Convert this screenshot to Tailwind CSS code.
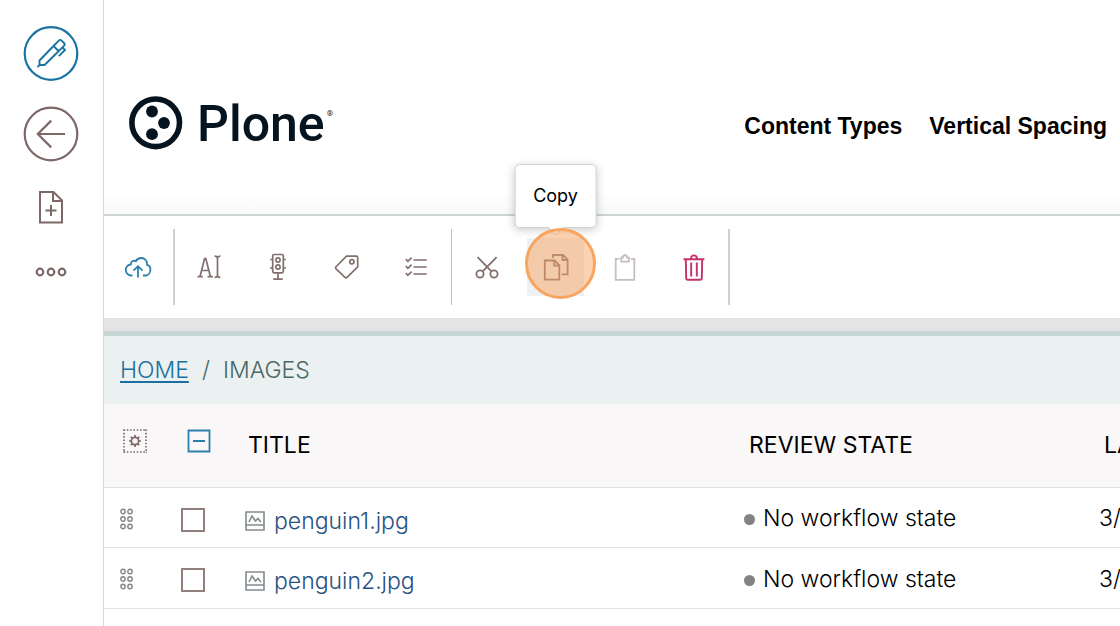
<!DOCTYPE html>
<html lang="en">
<head>
<meta charset="utf-8">
<meta name="viewport" content="width=device-width, initial-scale=1">
<title>Images – Plone</title>
<script src="https://cdn.jsdelivr.net/npm/@tailwindcss/browser@4"></script>
</head>
<body class="flex h-screen overflow-hidden bg-white font-[Inter,sans-serif] text-black">

<aside class="flex w-[104px] shrink-0 flex-col items-center border-r border-[#cfdcdf] pt-[25px] pr-[2px] text-[#7d6867]">
  <button type="button" aria-label="Edit" class="text-[#1a74a3]">
    <svg class="block" width="56" height="56" viewBox="0 0 56 56" fill="none" stroke="currentColor" stroke-width="2.2">
      <circle cx="28" cy="28.5" r="26.3"/>
      <path d="M16.5 40V35.5L30.5 21L35.8 15.6Q37.2 14.2 38.6 15.6L41 18Q42.4 19.4 41 20.8L36 25.7L21.6 40Z M30.5 21L35.6 26 M39.5 22.4L42 25L35.8 31.2 M16.5 40L14.5 42" stroke-width="1.9"/>
    </svg>
  </button>
  <button type="button" aria-label="Back" class="mt-[25px]">
    <svg class="block" width="56" height="56" viewBox="0 0 56 56" fill="none" stroke="currentColor" stroke-width="2.2">
      <circle cx="28" cy="28" r="26.3"/>
      <path d="M42 28H14.5M28.2 14.6L14.8 28L28.2 41.4"/>
    </svg>
  </button>
  <button type="button" aria-label="Add content" class="mt-7">
    <svg class="block" width="26" height="34" viewBox="0 0 26 34" fill="none" stroke="currentColor" stroke-width="2">
      <path d="M2 2H15.5L24 10.5V32.5H2ZM15 2V11H24M13 15V26M7.5 20.5H18.5"/>
    </svg>
  </button>
  <button type="button" aria-label="More" class="mt-[42px]">
    <svg class="block" width="32" height="12" viewBox="0 0 32 12" fill="none" stroke="currentColor" stroke-width="2.2">
      <circle cx="5" cy="6" r="3.3"/><circle cx="16" cy="6" r="3.3"/><circle cx="27" cy="6" r="3.3"/>
    </svg>
  </button>
</aside>

<div class="flex min-w-0 flex-1 flex-col overflow-hidden">
  <header class="flex h-[216px] shrink-0 items-center justify-between border-b-2 border-[#ccd4d5] bg-linear-to-b from-white from-90% to-[#f8f9f9] pr-[13px] pb-px pl-6 pt-[34px]">
    <a href="#" aria-label="Plone" class="flex items-center gap-[13px] text-[#06141f]">
      <svg class="block" width="56" height="56" viewBox="0 0 56 56" fill="currentColor">
        <circle cx="27.7" cy="26.8" r="23.8" fill="none" stroke="currentColor" stroke-width="5.6"/>
        <circle cx="24" cy="15.5" r="5.9"/><circle cx="36" cy="27" r="5.9"/><circle cx="24" cy="38.2" r="5.9"/>
      </svg>
      <span class="flex items-start font-[Roboto,sans-serif]"><span class="text-[50px]/[56px] font-medium">Plone</span><span class="pt-3 pl-[2px] text-[8px]/[12px]">®</span></span>
    </a>
    <nav class="flex gap-[27px] pt-1 font-['Liberation_Sans',Arial,sans-serif] text-[23px]/[28px] font-bold whitespace-nowrap">
      <a href="#">Content Types</a>
      <a href="#">Vertical Spacing</a>
    </nav>
  </header>

  <div role="toolbar" aria-label="Contents actions" class="flex h-[102px] shrink-0 items-center text-[#826f6e]">
    <button type="button" aria-label="Upload" class="ml-[5px] mr-[7px] flex h-[58px] w-[57px] items-center justify-center text-[#2c7fab]">
      <svg width="28" height="24" viewBox="0 0 28 24" fill="none" stroke="currentColor" stroke-width="1.8">
        <path d="M8.5 20.5H7.5C4 20.5 1.8 18 1.8 15C1.8 12 4 9.7 6.8 9.5C6.6 6.5 9.5 4.8 11.8 6.2C13 4 15 3 17.3 3C21 3 23.4 6 23.1 9.8C25.6 10.5 26.6 12.6 26.4 15C26.2 18 24.2 20.5 21.5 20.5H19M14 22.5V11.5M9.5 15.6L14 11.2L18.5 15.6"/>
      </svg>
    </button>
    <div class="h-[76px] w-[2px] bg-[#cbd1d2]"></div>
    <button type="button" aria-label="Rename" class="ml-[5px] mr-[7px] flex h-[58px] w-[57px] items-center justify-center">
      <svg width="26" height="26" viewBox="0 0 26 26" fill="none" stroke="currentColor" stroke-width="1.7">
        <path d="M4 22.5L8.6 4.5H9.8L14.4 22.5M5.7 16.5H12.7M1.5 22.7H6.8M11.6 22.7H17M18.6 2.2Q21.5 2.2 21.5 4.4Q21.5 2.2 24.4 2.2M21.5 4V21.5M18.6 23.3Q21.5 23.3 21.5 21.2Q21.5 23.3 24.4 23.3"/>
      </svg>
    </button>
    <button type="button" aria-label="State" class="ml-[5px] mr-[7px] flex h-[58px] w-[57px] items-center justify-center">
      <svg width="20" height="30" viewBox="0 0 20 30" fill="none" stroke="currentColor" stroke-width="1.7">
        <rect x="4.7" y="2.5" width="10.6" height="18.3" rx="1.5"/>
        <circle cx="10" cy="8" r="2.1"/><circle cx="10" cy="15" r="2.1"/>
        <path d="M10 21V27M5.2 27.2H14.8M2.2 7.5H4.7M2.2 15.8H4.7M15.3 7.5H17.8M15.3 15.8H17.8"/>
      </svg>
    </button>
    <button type="button" aria-label="Tags" class="ml-[5px] mr-[7px] flex h-[58px] w-[57px] items-center justify-center">
      <svg width="26" height="26" viewBox="0 0 26 26" fill="none" stroke="currentColor" stroke-width="1.7" stroke-linejoin="round">
        <path d="M12.5 2.2H22.4Q23.7 2.2 23.7 3.5V12.8L13 23.3Q12 24.2 11 23.3L1.8 14.6Q1.2 13.8 1.8 13Z"/><circle cx="17.9" cy="7.8" r="2.1"/>
      </svg>
    </button>
    <button type="button" aria-label="Properties" class="ml-[5px] mr-[7px] flex h-[58px] w-[57px] items-center justify-center">
      <svg width="24" height="22" viewBox="0 0 24 22" fill="none" stroke="currentColor" stroke-width="1.7">
        <path d="M9.5 4H22.7M9.5 11H22.7M9.5 18H22.7M1.8 3.2L3.9 5.3L7.6 1.6M1.8 10.2L3.9 12.3L7.6 8.6M1.8 17.2L3.9 19.3L7.6 15.6"/>
      </svg>
    </button>
    <div class="h-[76px] w-px bg-[#b9c2c3]"></div>
    <button type="button" aria-label="Cut" class="mx-[6px] flex h-[58px] w-[57px] items-center justify-center">
      <svg width="26" height="26" viewBox="0 0 26 26" fill="none" stroke="currentColor" stroke-width="1.8">
        <path d="M3.6 3.2L17.4 17.4M22.6 3.2L8.7 17.4"/><circle cx="6" cy="20" r="3.6"/><circle cx="20" cy="20" r="3.6"/>
      </svg>
    </button>
    <div class="relative mx-[6px]">
      <button type="button" aria-label="Copy" aria-describedby="copy-tip" class="flex h-[58px] w-[57px] items-center justify-center bg-[#edf1f2]">
        <svg width="28" height="30" viewBox="0 0 28 30" fill="none" stroke="currentColor" stroke-width="1.8">
          <path d="M2.8 8.5H12.6L17.3 13.2V27.6H2.8ZM12.2 8.5V13.6H17.3M11 6V3H21L25.6 7.6V22.4H20M20.5 3V8H25.6"/>
        </svg>
      </button>
      <div id="copy-tip" role="tooltip" class="absolute bottom-[68px] left-1/2 z-10 -translate-x-1/2 rounded-[5px] border border-[#cfd2d3] bg-white px-[18px] py-[17px] text-[18px]/[28px] text-black shadow-[0_2px_10px_rgba(0,0,0,0.2)]">Copy
        <svg class="absolute top-full left-1/2 -translate-x-1/2" width="16" height="9" viewBox="0 0 16 9" fill="#fff" stroke="#bdbdbd"><path d="M0 0L8 8L16 0"/></svg>
      </div>
      <div class="pointer-events-none absolute -top-[10px] -left-[2px] z-20 size-[71px] rounded-full border-3 border-[#f9a560] bg-[#f9a663]/50"></div>
    </div>
    <button type="button" aria-label="Paste" disabled class="mx-[6px] flex h-[58px] w-[57px] items-center justify-center text-[#c6bfbf]">
      <svg width="24" height="30" viewBox="0 0 24 30" fill="none" stroke="currentColor" stroke-width="1.8">
        <path d="M6.2 6.8H2.7V27.8H21.3V6.8H17.8M8.2 5.5H10Q10 3 12 3Q14 3 14 5.5H15.8V9.6H8.2Z"/>
      </svg>
    </button>
    <button type="button" aria-label="Delete" class="mx-[6px] flex h-[58px] w-[57px] items-center justify-center text-[#c5316c]">
      <svg width="24" height="30" viewBox="0 0 24 30" fill="none" stroke="currentColor" stroke-width="1.9">
        <path d="M1.6 7.2H22.4M3.8 7.2L4.2 26.4Q4.3 27.8 5.7 27.8H18.3Q19.7 27.8 19.8 26.4L20.2 7.2M9.2 10.5V24.5M14.8 10.5V24.5M9 7Q9 3.4 12 3.4Q15 3.4 15 7"/>
      </svg>
    </button>
    <div class="h-[76px] w-[2px] bg-[#cbd1d2]"></div>
  </div>

  <nav aria-label="Breadcrumb" class="shrink-0 border-t-[13px] border-[#e4e4e4]">
    <ol class="flex h-[73px] items-center border-t-[5px] border-[#c7d5d5] bg-[#ebf1f1] pl-4 text-[23px]/[28px] font-[350] text-[#4a6765]">
      <li><a href="#" class="text-[#1a70a0] underline decoration-2 underline-offset-3">HOME</a></li>
      <li aria-hidden="true" class="px-[13px]">/</li>
      <li aria-current="page">IMAGES</li>
    </ol>
  </nav>

  <table class="w-[1300px] shrink-0 table-fixed border-collapse text-left text-[23px]/[28px] font-[350] whitespace-nowrap">
    <colgroup><col class="w-[68px]"><col class="w-[64px]"><col class="w-[500px]"><col class="w-[356px]"><col></colgroup>
    <thead>
      <tr class="h-[83px] border-b border-[#dfe2e3] bg-[#faf7f8]">
        <th class="pb-2 pl-[19px]">
          <button type="button" aria-label="Select columns" class="block text-[#7d6867]">
            <svg class="block" width="24" height="24" viewBox="0 0 24 24" fill="none" stroke="currentColor">
              <path d="M.5 1H24M.5 23H24M1 .5V24M23 .5V24" stroke-width="1.6" stroke-dasharray="1.6 1.7"/>
              <circle cx="12" cy="12" r="3.6" stroke-width="1.7"/>
              <path d="M12 6V8.2M12 15.8V18M6 12H8.2M15.8 12H18M7.8 7.8L9.3 9.3M14.7 14.7L16.2 16.2M16.2 7.8L14.7 9.3M9.3 14.7L7.8 16.2" stroke-width="1.7"/>
            </svg>
          </button>
        </th>
        <th class="pb-2 pl-[15px]">
          <button type="button" aria-label="Deselect all" class="block text-[#2c7fab]">
            <svg class="block" width="24" height="24" viewBox="0 0 24 24" fill="none" stroke="currentColor" stroke-width="1.8"><path d="M1.5 1.5H22.5V22.5H1.5ZM6 12H18"/></svg>
          </button>
        </th>
        <th class="pl-3 font-normal">TITLE</th>
        <th class="pl-[13px] font-normal">REVIEW STATE</th>
        <th class="pl-3 font-normal">LAST MODIFIED</th>
      </tr>
    </thead>
    <tbody>
      <tr class="h-[60px] border-b border-[#dfe2e3]">
        <td class="pt-[3px] pl-4">
          <svg class="block text-[#858585]" width="13" height="22" viewBox="0 0 13 22" fill="none" stroke="currentColor" stroke-width="1.4"><circle cx="3" cy="3.5" r="2.2"/><circle cx="10" cy="3.5" r="2.2"/><circle cx="3" cy="11" r="2.2"/><circle cx="10" cy="11" r="2.2"/><circle cx="3" cy="18.5" r="2.2"/><circle cx="10" cy="18.5" r="2.2"/></svg>
        </td>
        <td class="pt-[5px] pl-[9px]"><input type="checkbox" aria-label="Select penguin1.jpg" class="block size-6 appearance-none border-2 border-[#927f7e]"></td>
        <td class="pt-[7px] pl-[9px]"><a href="#" class="flex items-center gap-[9px] text-[#27517f]">
          <svg class="block text-[#838b8e]" width="20" height="20" viewBox="0 0 20 20" fill="none" stroke="currentColor" stroke-width="1.6"><path d="M1 1H19V19H1ZM1 14H19M4 11L7 5L10.5 10L13 7.5L15.8 11"/></svg>penguin1.jpg</a></td>
        <td class="pt-[2px] pl-2"><span class="flex items-center gap-[8px]"><span class="mt-[3px] size-[11px] rounded-full bg-[#828282]"></span>No workflow state</span></td>
        <td class="pt-[2px] pl-[7px]">3/11/2024</td>
      </tr>
      <tr class="h-[61px] border-b border-[#dfe2e3]">
        <td class="pt-[3px] pl-4">
          <svg class="block text-[#858585]" width="13" height="22" viewBox="0 0 13 22" fill="none" stroke="currentColor" stroke-width="1.4"><circle cx="3" cy="3.5" r="2.2"/><circle cx="10" cy="3.5" r="2.2"/><circle cx="3" cy="11" r="2.2"/><circle cx="10" cy="11" r="2.2"/><circle cx="3" cy="18.5" r="2.2"/><circle cx="10" cy="18.5" r="2.2"/></svg>
        </td>
        <td class="pt-[5px] pl-[9px]"><input type="checkbox" aria-label="Select penguin2.jpg" class="block size-6 appearance-none border-2 border-[#927f7e]"></td>
        <td class="pt-[7px] pl-[9px]"><a href="#" class="flex items-center gap-[9px] text-[#27517f]">
          <svg class="block text-[#838b8e]" width="20" height="20" viewBox="0 0 20 20" fill="none" stroke="currentColor" stroke-width="1.6"><path d="M1 1H19V19H1ZM1 14H19M4 11L7 5L10.5 10L13 7.5L15.8 11"/></svg>penguin2.jpg</a></td>
        <td class="pt-[2px] pl-2"><span class="flex items-center gap-[8px]"><span class="mt-[3px] size-[11px] rounded-full bg-[#828282]"></span>No workflow state</span></td>
        <td class="pt-[2px] pl-[7px]">3/11/2024</td>
      </tr>
    </tbody>
  </table>
</div>
</body>
</html>
